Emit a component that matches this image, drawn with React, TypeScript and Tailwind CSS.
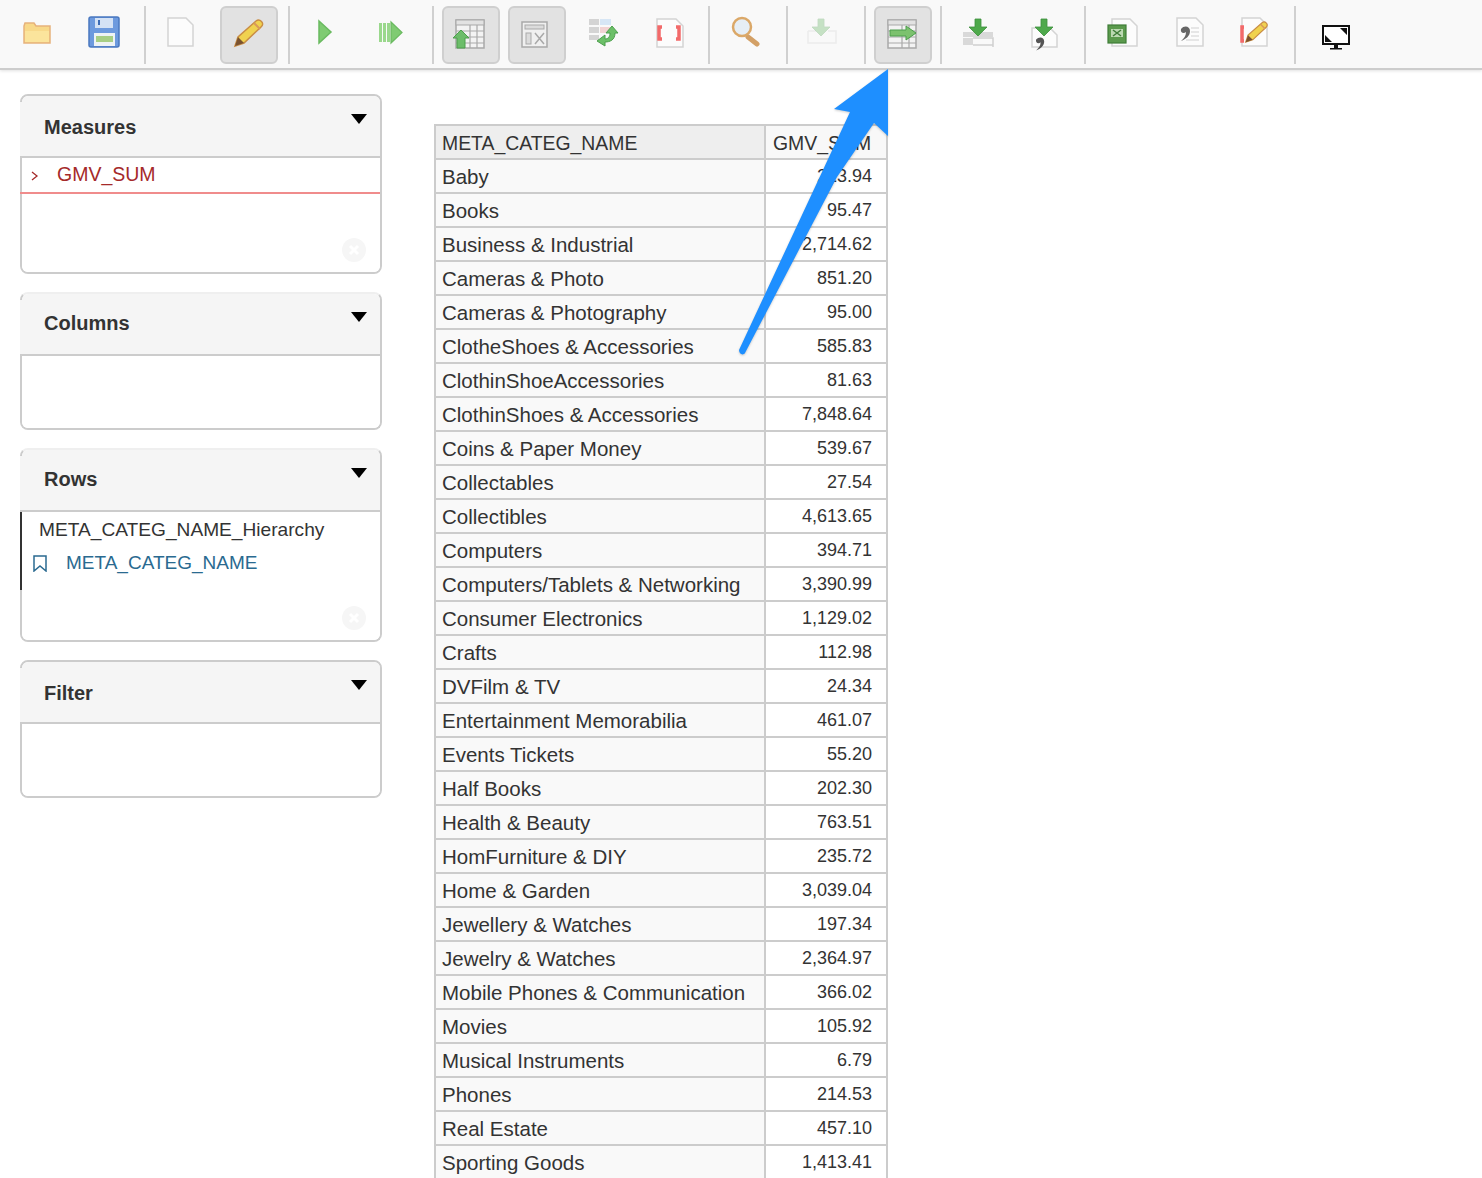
import type { ReactNode } from 'react';

const rows: [string, string][] = [
  ['Baby', '213.94'],
  ['Books', '95.47'],
  ['Business & Industrial', '2,714.62'],
  ['Cameras & Photo', '851.20'],
  ['Cameras & Photography', '95.00'],
  ['ClotheShoes & Accessories', '585.83'],
  ['ClothinShoeAccessories', '81.63'],
  ['ClothinShoes & Accessories', '7,848.64'],
  ['Coins & Paper Money', '539.67'],
  ['Collectables', '27.54'],
  ['Collectibles', '4,613.65'],
  ['Computers', '394.71'],
  ['Computers/Tablets & Networking', '3,390.99'],
  ['Consumer Electronics', '1,129.02'],
  ['Crafts', '112.98'],
  ['DVFilm & TV', '24.34'],
  ['Entertainment Memorabilia', '461.07'],
  ['Events Tickets', '55.20'],
  ['Half Books', '202.30'],
  ['Health & Beauty', '763.51'],
  ['HomFurniture & DIY', '235.72'],
  ['Home & Garden', '3,039.04'],
  ['Jewellery & Watches', '197.34'],
  ['Jewelry & Watches', '2,364.97'],
  ['Mobile Phones & Communication', '366.02'],
  ['Movies', '105.92'],
  ['Musical Instruments', '6.79'],
  ['Phones', '214.53'],
  ['Real Estate', '457.10'],
  ['Sporting Goods', '1,413.41'],
];

function ToolButton({ active, children }: { active?: boolean; children: ReactNode }) {
  return (
    <div className={active ? 'w-[58px] h-[58px] shrink-0 rounded-md border-2 border-[#cfcfcf] bg-[#e2e2e2] box-border' : 'w-[58px] h-[58px] shrink-0 border-2 border-transparent box-border'}>
      <svg viewBox="2 2 54 54" className="w-[54px] h-[54px] overflow-visible blur-[0.5px]">
        {children}
      </svg>
    </div>
  );
}

function Sep({ tight }: { tight?: boolean }) {
  return <div className={tight ? 'w-[2px] h-[58px] bg-[#d0d0d0] shrink-0' : 'w-[2px] h-[58px] bg-[#d0d0d0] ml-[2px] shrink-0'} />;
}

// file sheet with folded corner, used by several toolbar icons
function Sheet({ x, y, w, h }: { x: number; y: number; w: number; h: number }) {
  return (
    <path
      d={`M${x} ${y}H${x + w - 7}L${x + w} ${y + 7}V${y + h}H${x}Z`}
      fill="#fcfcfc"
      stroke="#d4d4d4"
      strokeWidth="1.5"
    />
  );
}

function GridTable({ x, y, w, h }: { x: number; y: number; w: number; h: number }) {
  return (
    <g>
      <rect x={x} y={y} width={w} height={h} fill="#f3f3f3" stroke="#a9a9a9" strokeWidth="1.5" />
      <rect x={x} y={y} width={w} height={5} fill="#e2e2e2" stroke="#a9a9a9" strokeWidth="1" />
      <path d={`M${x} ${y + 11}H${x + w}M${x} ${y + 17}H${x + w}M${x} ${y + 23}H${x + w}M${x + w * 0.5} ${y + 5}V${y + h}M${x + w * 0.75} ${y + 5}V${y + h}`} stroke="#a9a9a9" strokeWidth="1.2" />
    </g>
  );
}

function DownArrow({ x, y, op = 1 }: { x: number; y: number; op?: number }) {
  return (
    <path
      d={`M${x - 3} ${y}h6v8h6l-9 9l-9 -9h6z`}
      fill="#4ea94b"
      stroke="#3d8f3c"
      strokeWidth="0.8"
      opacity={op}
    />
  );
}

function Pencil({ dx = 0, dy = 0, s = 1 }: { dx?: number; dy?: number; s?: number }) {
  return (
    <g transform={`translate(${dx} ${dy}) scale(${s})`}>
      <path d="M15 40l3-9L36 15c2-1.500 4-1 5.500 .5s1.500 3.500 0 5L24 37z" fill="#f0d24f" stroke="#c98d45" strokeWidth="1.5" />
      <path d="M34 17l6 6" stroke="#d99a5a" strokeWidth="2" />
      <path d="M15 40l3-9l6 6z" fill="#7a5230" />
    </g>
  );
}

function MiniTableRow({ x, y, op = 1 }: { x: number; y: number; op?: number }) {
  return (
    <g opacity={op}>
      <rect x={x} y={y} width="30" height="5" fill="#d9d9d9" />
      <rect x={x} y={y + 6} width="10" height="7" fill="#d9d9d9" />
      <path d={`M${x + 10} ${y + 6}h20v9M${x + 10} ${y + 13}h20`} fill="none" stroke="#d0d0d0" strokeWidth="1.5" />
    </g>
  );
}

const bass = 'M-1 4c3 -4 9 -3 9 2c0 5 -4 8 -9 10c3 -3 5 -5 5 -9c-2 2 -6 1 -5 -3z';

function Toolbar() {
  return (
    <div className="flex items-start gap-2 h-[70px] pl-[10px] pt-[6px] bg-[#f9f9f9] border-b-2 border-[#cdcdcd] shadow-[0_1px_3px_rgba(0,0,0,0.12)] box-border">
      <ToolButton>
        <path d="M14 20l1-3h9l2 3h14v17H14z" fill="#f8d98a" stroke="#e6b27c" strokeWidth="1.5" />
        <path d="M15 25h24v11H15z" fill="#fbe49c" />
      </ToolButton>
      <ToolButton>
        <rect x="13" y="11" width="30" height="30" rx="2" fill="#6d9ade" stroke="#4a78c0" strokeWidth="1.5" />
        <rect x="19" y="12" width="18" height="10" fill="#d4e2f5" />
        <rect x="22" y="14" width="2" height="5" fill="#3d6cb5" />
        <rect x="18" y="27" width="21" height="13" fill="#eef3f5" />
        <rect x="20" y="30" width="17" height="6" fill="#a8cf85" />
      </ToolButton>
      <Sep />
      <ToolButton>
        <Sheet x={14} y={12} w={25} h={28} />
      </ToolButton>
      <ToolButton active>
        <Pencil />
      </ToolButton>
      <Sep />
      <ToolButton>
        <path d="M21 15l12 11l-12 11z" fill="#7fcb72" stroke="#6aba60" strokeWidth="1.5" />
      </ToolButton>
      <ToolButton>
        <path d="M15 17h3v19h-3zM19 17h3v19h-3zM23 17h3v19h-3z" fill="#9ad88c" />
        <path d="M27 16l11 10.500l-11 10.500z" fill="#7fcb72" stroke="#6aba60" strokeWidth="1.2" />
      </ToolButton>
      <Sep />
      <ToolButton active>
        <GridTable x={14} y={14} w={28} h={28} />
        <path d="M19 24l8 8h-4v10h-8V32h-4z" fill="#6cbd6a" stroke="#4d9e4d" strokeWidth="1" />
      </ToolButton>
      <ToolButton active>
        <rect x="14" y="16" width="25" height="25" fill="#f0f0f0" stroke="#a9a9a9" strokeWidth="1.5" />
        <rect x="17" y="19" width="19" height="4" fill="#dcdcdc" stroke="#a9a9a9" />
        <rect x="18" y="27" width="5" height="11" fill="#dcdcdc" stroke="#a9a9a9" />
        <path d="M27 27l9 11M36 27l-9 11" stroke="#a9a9a9" strokeWidth="1.5" />
      </ToolButton>
      <ToolButton>
        <rect x="15" y="13" width="10" height="6" fill="#d4d4d4" />
        <rect x="26" y="13" width="11" height="6" fill="#d7e6f5" />
        <rect x="15" y="21" width="10" height="6" fill="#d4d4d4" />
        <rect x="26" y="21" width="10" height="6" fill="#f2d3d3" />
        <rect x="15" y="29" width="10" height="5" fill="#d4d4d4" />
        <path d="M41 27c0 7-5 9-10 9v4l-8-5l8-6v4c3 0 5-2 5-6h-4l6-7l6 7z" fill="#6cc068" stroke="#4d9e4d" strokeWidth="1" />
      </ToolButton>
      <ToolButton>
        <Sheet x={17} y={13} w={26} h={28} />
        <path d="M22 21h-3v12h3M36 21h3v12h-3" fill="none" stroke="#f26a6a" strokeWidth="3.500" />
      </ToolButton>
      <Sep />
      <ToolButton>
        <path d="M30 31l9 7" stroke="#d3a066" strokeWidth="5" strokeLinecap="round" />
        <circle cx="24" cy="21" r="9" fill="#e6eef5" stroke="#dba868" strokeWidth="2.500" />
      </ToolButton>
      <Sep />
      <ToolButton>
        <path d="M12 25h8M32 25h8v12H12V25" fill="none" stroke="#ececec" strokeWidth="1.5" />
        <DownArrow x={25} y={13} op={0.3} />
      </ToolButton>
      <Sep />
      <ToolButton active>
        <GridTable x={14} y={14} w={28} h={28} />
        <path d="M16 24h16v-4l10 7l-10 7v-4H16z" fill="#7cc26e" stroke="#4d9e4d" strokeWidth="1" />
      </ToolButton>
      <Sep tight />
      <ToolButton>
        <MiniTableRow x={13} y={26} />
        <DownArrow x={28} y={13} />
      </ToolButton>
      <ToolButton>
        <Sheet x={16} y={22} w={25} h={19} />
        <path d={bass} transform="translate(21 30) scale(0.9)" fill="#555" />
        <DownArrow x={28} y={13} />
      </ToolButton>
      <Sep />
      <ToolButton>
        <Sheet x={18} y={13} w={25} h={27} />
        <rect x="14" y="19" width="18" height="18" fill="#5b9a4d" stroke="#3f7d38" strokeWidth="1.2" />
        <rect x="17" y="23" width="12" height="8" fill="#bcd9b2" />
        <path d="M19 24l8 6M27 24l-8 6" stroke="#3f7d38" strokeWidth="1.5" />
      </ToolButton>
      <ToolButton>
        <Sheet x={17} y={12} w={26} h={28} />
        <path d={bass} transform="translate(22 19)" fill="#666" />
        <path d="M31 22h8M31 26h8M31 30h8M26 34h13" stroke="#cfcfcf" strokeWidth="1.2" />
      </ToolButton>
      <ToolButton>
        <Sheet x={16} y={12} w={25} h={28} />
        <path d="M18 21h-2v14h2" fill="none" stroke="#f26a6a" strokeWidth="3.500" />
        <Pencil dx={8} dy={5} s={0.78} />
      </ToolButton>
      <Sep />
      <ToolButton>
        <rect x="19" y="20" width="26" height="18" fill="#fff" stroke="#111" strokeWidth="2" />
        <path d="M21 36v-7l7 7zM43 22v7l-7-7z" fill="#111" />
        <path d="M30 39h4v3h-4zM26 42h12v1.500H26z" fill="#111" />
      </ToolButton>
    </div>
  );
}

function Panel({ title, bodyH, soft, clear, children, overlay }: { title: string; bodyH: string; soft?: boolean; clear?: string; children?: ReactNode; overlay?: ReactNode }) {
  return (
    <div className="relative">
      <div className={soft ? 'rounded-lg border-2 border-[#cccccc] border-t-[#efefef] overflow-hidden' : 'rounded-lg border-2 border-[#cccccc] overflow-hidden'}>
        <div className={soft ? 'h-[60px] pb-[2px] box-border bg-[#f5f5f5] pl-[22px] flex items-center text-[20px] font-bold text-[#333333]' : 'h-[60px] pt-[2px] box-border bg-[#f5f5f5] pl-[22px] flex items-center text-[20px] font-bold text-[#333333]'}>
          {title}
        </div>
        <div className="h-[2px] bg-[#cccccc]" />
        <div className={bodyH + ' bg-white'}>{children}</div>
      </div>
      {/* header bleeds over the left border, as do the line markers below it */}
      <div className="absolute left-0 top-2 w-[2px] h-[54px] bg-[#f5f5f5]" />
      <div className="absolute left-0 top-[62px] w-[2px] h-[2px] bg-[#cccccc]" />
      <svg viewBox="0 0 16 10" className="absolute right-[15px] top-[20px] w-4 h-[10px]">
        <path d="M0 0h16l-8 10z" fill="#000" />
      </svg>
      {overlay}
      {clear && (
        <svg viewBox="0 0 24 24" className={clear + ' absolute right-[16px] w-6 h-6'}>
          <circle cx="12" cy="12" r="12" fill="#f6f6f6" />
          <path d="M8 8l8 8M16 8l-8 8" stroke="#fff" strokeWidth="3" />
        </svg>
      )}
    </div>
  );
}

function PivotTable() {
  return (
    <table className="table-fixed w-[454px] border-separate border-spacing-0 border-l-2 border-t-2 border-[#cccccc] text-[#333333] text-[20.500px] leading-[26px]">
      <thead>
        <tr>
          <th className="w-[330px] h-[34px] p-0 pt-[1px] pl-[6px] font-normal text-[19.400px] text-left bg-[#eeeeee] border-r-2 border-b-2 border-[#cccccc]">META_CATEG_NAME</th>
          <th className="h-[34px] p-0 pt-[1px] pl-[7px] font-normal text-[19.400px] text-left bg-[#f8f8f8] border-r-2 border-b-2 border-[#cccccc]">GMV_SUM</th>
        </tr>
      </thead>
      <tbody>
        {rows.map(([name, value]) => (
          <tr key={name}>
            <td className="h-[34px] p-0 pt-[1px] pl-[6px] bg-[#f9f9f9] border-r-2 border-b-2 border-[#cccccc] whitespace-nowrap">{name}</td>
            <td className="h-[34px] p-0 pr-[14px] text-right text-[18px] bg-white border-r-2 border-b-2 border-[#cccccc]">{value}</td>
          </tr>
        ))}
      </tbody>
    </table>
  );
}

export default function App() {
  return (
    <div className="relative h-screen overflow-hidden bg-white font-['Liberation_Sans',Arial,sans-serif] text-[#333333]">
      <Toolbar />
      <div className="flex items-start">
        <div className="w-[362px] ml-5 mt-6 flex flex-col gap-[18px] shrink-0">
          <Panel
            title="Measures"
            bodyH="h-[114px]"
            clear="top-[144px]"
            overlay={<div className="absolute left-0 right-[2px] top-[98px] h-[2px] bg-[#f08c8c]" />}
          >
            <div className="flex items-center h-[34px] text-[#a52a2a] text-[19.500px] -ml-[2px]">
              <svg viewBox="0 0 8 10" className="w-2 h-[10px] ml-[11px] mt-[2px]">
                <path d="M1 1l5 4l-5 4" fill="none" stroke="#a52a2a" strokeWidth="1.3" />
              </svg>
              <span className="ml-[18px]">GMV_SUM</span>
            </div>
          </Panel>
          <Panel title="Columns" bodyH="h-[72px]" soft />
          <Panel
            title="Rows"
            bodyH="h-[128px]"
            soft
            clear="top-[158px]"
            overlay={<div className="absolute left-0 top-[64px] w-[2px] h-[78px] bg-[#333333]" />}
          >
            <div className="pl-[17px] pt-[1px]">
              <div className="h-[35px] flex items-center text-[19.150px] text-[#333333]">META_CATEG_NAME_Hierarchy</div>
              <div className="flex items-center h-[30px] -ml-[6px] text-[#2a6a90] text-[19px]">
                <svg viewBox="0 0 14 17" className="w-[14px] h-[17px]">
                  <path d="M1 1h12v15l-6-5l-6 5z" fill="none" stroke="#2a6a90" strokeWidth="1.5" />
                </svg>
                <span className="ml-[19px]">META_CATEG_NAME</span>
              </div>
            </div>
          </Panel>
          <Panel title="Filter" bodyH="h-[72px]" />
        </div>
        <div className="ml-[52px] mt-[54px] shrink-0">
          <PivotTable />
        </div>
      </div>
      {/* annotation arrow drawn over the screenshot */}
      <svg viewBox="0 0 1482 1178" className="absolute left-0 top-0 w-[1482px] h-[1178px] pointer-events-none drop-shadow-[0_1px_1px_rgba(0,0,0,0.2)]">
        <path d="M888 69L834 109L850 112L739 350C739 354 743 356 745 353L837 177L874 123L888 136Z" fill="#1e8fff" />
      </svg>
    </div>
  );
}
